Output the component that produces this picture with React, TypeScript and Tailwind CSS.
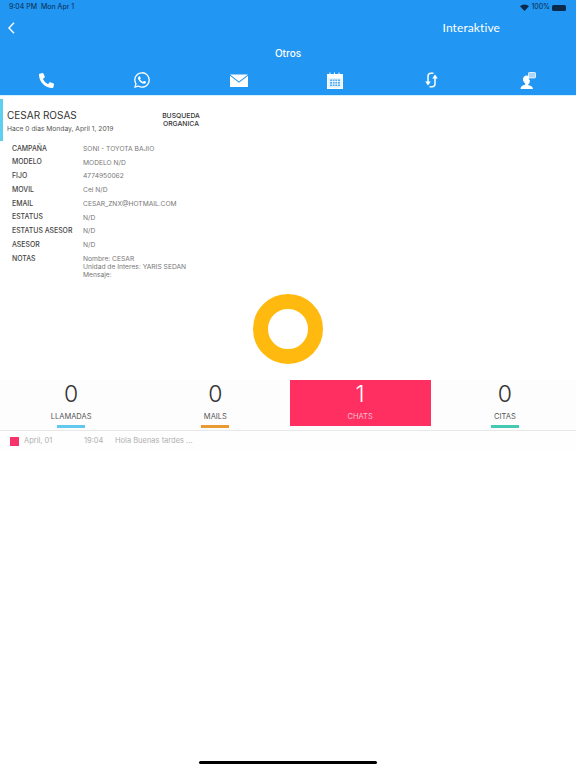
import React from "react";
import { FaPhoneAlt } from "react-icons/fa";
import { IoLogoWhatsapp } from "react-icons/io5";

const rows: [string, string][] = [
  ["CAMPAÑA", "SONI - TOYOTA BAJIO"],
  ["MODELO", "MODELO N/D"],
  ["FIJO", "4774950062"],
  ["MOVIL", "Cel N/D"],
  ["EMAIL", "CESAR_ZNX@HOTMAIL.COM"],
  ["ESTATUS", "N/D"],
  ["ESTATUS ASESOR", "N/D"],
  ["ASESOR", "N/D"],
];

function Mail() {
  return (
    <svg width="18" height="13" viewBox="0 0 18 13">
      <path d="M0 0.5h18L9 7.5z" fill="#fff" />
      <path d="M0 1.8v11.2h18V1.8L9 8.8z" fill="#fff" />
    </svg>
  );
}
function Calendar() {
  return (
    <svg width="16" height="17" viewBox="0 0 16 17">
      <path fillRule="evenodd" fill="#fff" d="M0 2h2.5V0.5h1V2h3.5V0.5h1V2h3.5V0.5h1V2H16v15H0zM1 6v10h14V6z" />
      <rect x="1" y="6" width="14" height="10" fill="#e9f5fe" />
      <g fill="#2196f3" opacity="0.75">
        <rect x="3" y="7.5" width="10" height="1.6" />
        <rect x="3" y="10" width="10" height="1.6" />
        <rect x="3" y="12.5" width="10" height="1.6" />
        <rect x="5.3" y="7.5" width="0.7" height="6.6" fill="#fff" />
        <rect x="7.6" y="7.5" width="0.7" height="6.6" fill="#fff" />
        <rect x="10" y="7.5" width="0.7" height="6.6" fill="#fff" />
      </g>
    </svg>
  );
}
function Sync() {
  return (
    <svg width="15" height="16" viewBox="0 0 15 16" fill="none" stroke="#fff" strokeWidth="1.5">
      <path d="M9.5 1.2H7C5 1.2 4 2.4 4 4.2V11" />
      <path d="M1.2 9.6L4 13.4L6.8 9.6z" fill="#fff" stroke="none" />
      <path d="M5.5 14.8H8C10 14.8 11 13.6 11 11.8V5" />
      <path d="M8.2 6.4L11 2.6L13.8 6.4z" fill="#fff" stroke="none" />
    </svg>
  );
}
function Advisor() {
  return (
    <svg width="16" height="17" viewBox="0 0 16 17">
      <path fill="#fff" d="M0.5 17c0-2.6 2.2-3.6 4.6-4.2v-1.5C3.7 10.4 3 8.9 3 7.2 3 4.8 4.7 3.4 6.6 3.4c1 0 1.8.3 2.4.9v3.2l1 .6-.5 2.8-1.5 1.9v.2c2.4.6 5 1.6 5 4z" />
      <rect x="8.5" y="0.5" width="7" height="5.4" rx="0.8" fill="#a9d6fa" stroke="#fff" strokeWidth="0.8" />
    </svg>
  );
}

function Slot({ children }: { children: React.ReactNode }) {
  return <span className="w-[18px] flex justify-center">{children}</span>;
}

function Stat({ n, label, bar, shift }: { n: string; label: string; bar: string; shift?: boolean }) {
  return (
    <div className={`flex-1 flex flex-col items-center ${shift ? "pr-[1px]" : "pl-[1px]"}`}>
      <div className="text-[23px] leading-[27px] mt-[1px] text-[#333] font-light">{n}</div>
      <div className="text-[7.5px] leading-[10px] mt-[4px] text-[#555]">{label}</div>
      <div className={`w-[28px] h-[3px] mt-[3px] ${bar}`} />
    </div>
  );
}

export default function App() {
  return (
    <div className="relative w-[576px] h-[768px] bg-white overflow-hidden font-['Inter','Liberation_Sans',sans-serif]">
      <header className="h-[95px] bg-[#2196f3] text-white flex flex-col">
        <div className="flex justify-between items-center pl-[9px] pr-[10px] pt-[1px] h-[14px] text-[7px] text-[#0b2a4a]">
          <span>9:04 PM&nbsp;&nbsp;Mon Apr 1</span>
          <span className="flex items-center gap-[2px]">
            <svg width="9" height="7" viewBox="0 0 9 7"><path d="M0 2.2A6.5 6.5 0 0 1 9 2.2L4.5 7z" fill="#0b2a4a" /></svg>
            100%
            <span className="w-[14px] h-[6px] rounded-[1.5px] bg-[#0b2a4a]" />
          </span>
        </div>
        <div className="flex justify-between items-center h-[28px] pl-[8px] pr-[76px]">
          <svg width="7" height="12" viewBox="0 0 7 12" fill="none" stroke="#fff" strokeWidth="1.4"><path d="M6 0.7L1 6l5 5.3" /></svg>
          <span className="text-[12px] font-['Lato',sans-serif] tracking-[0.1px]">Interaktive</span>
        </div>
        <div className="h-[23px] flex items-center justify-center text-[10px] font-medium">Otros</div>
        <div className="flex-1 flex items-center justify-between pl-[37px] pr-[39px]">
          <Slot><FaPhoneAlt size={15} /></Slot>
          <Slot><IoLogoWhatsapp size={18} /></Slot>
          <Slot><Mail /></Slot>
          <Slot><Calendar /></Slot>
          <Slot><Sync /></Slot>
          <Slot><Advisor /></Slot>
        </div>
      </header>
      <div className="h-[1px] bg-[#d4f2fd]" />

      <section className="pt-[3px]">
        <div className="flex h-[42px]">
          <div className="w-[3px] h-full bg-[#5dd0f2]" />
          <div className="ml-[4px] w-[146px] pt-[10px]">
            <div className="text-[10px] leading-[13px] text-[#333]">CESAR ROSAS</div>
            <div className="text-[6.7px] leading-[9px] mt-[3px] text-[#555]">Hace 0 días Monday, April 1, 2019</div>
          </div>
          <div className="w-[56px] pt-[13px] text-center text-[6.8px] leading-[8px] font-medium text-[#333]">
            BUSQUEDA<br />ORGANICA
          </div>
        </div>
        <div className="pl-[12px] pt-[1px]">
          {rows.map(([k, v]) => (
            <div key={k} className="flex h-[13.75px] items-center text-[6.7px]">
              <span className="w-[71px] font-medium text-[#444] text-[6.9px]">{k}</span>
              <span className="text-[#777]">{v}</span>
            </div>
          ))}
          <div className="flex text-[6.7px] leading-[8px] pt-[3px]">
            <span className="w-[71px] font-medium text-[#444] text-[6.9px]">NOTAS</span>
            <span className="text-[#777]">Nombre: CESAR<br />Unidad de Interes: YARIS SEDAN<br />Mensaje:</span>
          </div>
        </div>
      </section>

      <div className="flex justify-center pt-[15px]">
        <div className="w-[70px] h-[70px] rounded-full border-[15px] border-[#ffb90f]" />
      </div>

      <section className="mt-[16px] h-[51px] flex bg-[#fdfdfd] border-b border-[#e8e8e8]">
        <Stat n="0" label="LLAMADAS" bar="bg-[#64c8ee]" shift />
        <Stat n="0" label="MAILS" bar="bg-[#ea9a33]" />
        <div className="flex-1 pl-[2px] pr-[2px]">
          <div className="ml-[1px] h-[46px] bg-[#ff2f62] text-white flex flex-col items-center">
            <div className="text-[23px] leading-[27px] mt-[1px] font-light">1</div>
            <div className="text-[7.5px] leading-[10px] mt-[4px] text-[#f9c0cf]">CHATS</div>
          </div>
        </div>
        <Stat n="0" label="CITAS" bar="bg-[#45c9b0]" />
      </section>

      <div className="flex items-center h-[20px] pl-[10px] text-[7.5px] text-[#b0b0b0] bg-[#fefefe]">
        <span className="w-[9px] h-[9px] bg-[#f7336b]" />
        <span className="ml-[5px] w-[60px]">April, 01</span>
        <span className="w-[31px]">19:04</span>
        <span>Hola Buenas tardes ...</span>
      </div>

      <div className="absolute left-[199px] bottom-[4px] w-[178px] h-[3px] rounded-full bg-black" />
    </div>
  );
}
